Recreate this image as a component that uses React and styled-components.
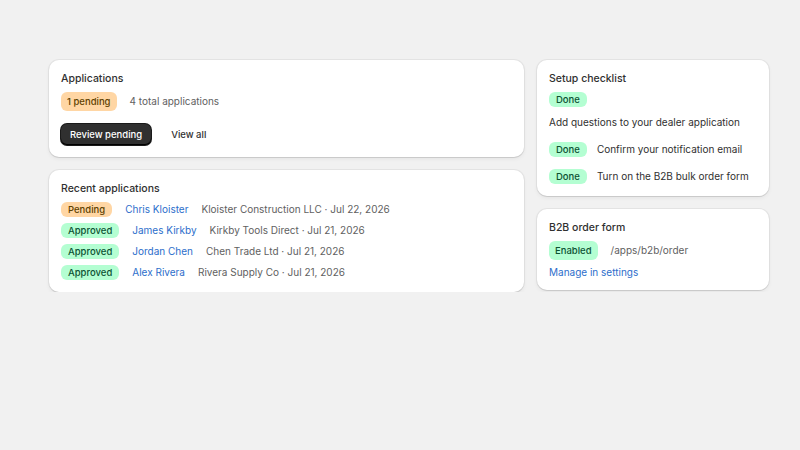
import React from 'react';
import styled, { createGlobalStyle } from 'styled-components';

const Global = createGlobalStyle`
  body { margin: 0; background: #f1f1f1; font-family: Inter, "Noto Sans", sans-serif; color: #303030; }
`;

const Page = styled.div`
  display: flex;
  gap: 13px;
  padding: 60px 31px 0 49px;
  align-items: flex-start;
`;

const Column = styled.div`
  display: flex;
  flex-direction: column;
  gap: 13px;
  width: ${p => p.$w}px;
  flex: none;
`;

const Card = styled.div`
  background: #fff;
  border-radius: 10px;
  box-shadow: 0 1px 0 rgba(0,0,0,0.07), 0 0 0 1px rgba(0,0,0,0.05), 0 2px 4px rgba(0,0,0,0.06);
  padding: 12px;
  display: flex;
  flex-direction: column;
  gap: ${p => p.$gap || 6}px;
  font-size: 10px;
`;

const Title = styled.div`
  font-weight: 500;
  font-size: 10.5px;
  line-height: 14px;
`;

const Row = styled.div`
  display: flex;
  align-items: center;
  flex-wrap: wrap;
  column-gap: ${p => p.$gap || 13}px;
  row-gap: 8px;
  line-height: 15px;
`;

const Badge = styled.span`
  display: inline-block;
  padding: ${p => (p.$big ? '3px 6px' : '1px 7px')};
  border-radius: 6px;
  font-size: 9.5px;
  font-weight: 500;
  line-height: 13px;
  background: ${p => (p.$tone === 'warn' ? '#ffd6a4' : '#b4fed2')};
  color: ${p => (p.$tone === 'warn' ? '#5e4200' : '#0c5132')};
`;

const Muted = styled.span`
  color: #616161;
`;

const ItemText = styled.span`
  white-space: nowrap;
`;

const Link = styled.a`
  color: #2c6ecb;
  text-decoration: none;
  cursor: pointer;
`;

const Actions = styled.div`
  display: flex;
  align-items: center;
  gap: 8px;
  margin-top: 7px;
`;

const Primary = styled.button`
  background: #303030;
  color: #fff;
  border: none;
  border-radius: 6px;
  font: 500 9.5px Inter, sans-serif;
  height: 21px;
  padding: 0 9px;
  box-shadow: inset 0 -1px 0 #000, 0 0 0 1px #1a1a1a;
`;

const Plain = styled.button`
  background: none;
  border: none;
  color: #303030;
  font: 500 9.5px Inter, sans-serif;
  padding: 0 12px;
`;

const List = styled.div`
  display: flex;
  flex-direction: column;
  gap: ${p => p.$gap}px;
`;

const rows = [
  ['warn', 'Pending', 'Chris Kloister', 'Kloister Construction LLC · Jul 22, 2026'],
  ['ok', 'Approved', 'James Kirkby', 'Kirkby Tools Direct · Jul 21, 2026'],
  ['ok', 'Approved', 'Jordan Chen', 'Chen Trade Ltd · Jul 21, 2026'],
  ['ok', 'Approved', 'Alex Rivera', 'Rivera Supply Co · Jul 21, 2026'],
];

const checklist = [
  'Add questions to your dealer application',
  'Confirm your notification email',
  'Turn on the B2B bulk order form',
];

export default function App() {
  return (
    <>
      <Global />
      <Page>
        <Column $w={475}>
          <Card>
            <Title>Applications</Title>
            <Row>
              <Badge $tone="warn" $big>1 pending</Badge>
              <Muted>4 total applications</Muted>
            </Row>
            <Actions>
              <Primary>Review pending</Primary>
              <Plain>View all</Plain>
            </Actions>
          </Card>
          <Card>
            <Title>Recent applications</Title>
            <List $gap={6}>
              {rows.map(([tone, status, name, info]) => (
                <Row key={name}>
                  <Badge $tone={tone}>{status}</Badge>
                  <Link>{name}</Link>
                  <Muted>{info}</Muted>
                </Row>
              ))}
            </List>
          </Card>
        </Column>
        <Column $w={232}>
          <Card>
            <Title>Setup checklist</Title>
            <List $gap={12}>
              {checklist.map(item => (
                <Row key={item} $gap={10}>
                  <Badge>Done</Badge>
                  <ItemText>{item}</ItemText>
                </Row>
              ))}
            </List>
          </Card>
          <Card>
            <Title>B2B order form</Title>
            <Row>
              <Badge $big>Enabled</Badge>
              <Muted>/apps/b2b/order</Muted>
            </Row>
            <Link>Manage in settings</Link>
          </Card>
        </Column>
      </Page>
    </>
  );
}
